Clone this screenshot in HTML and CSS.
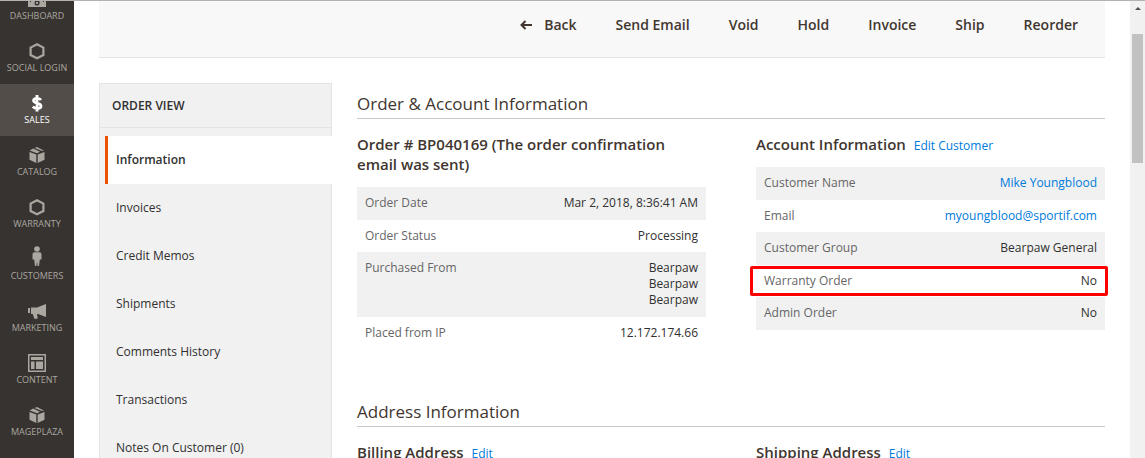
FILE: index.html
```html
<!DOCTYPE html>
<html lang="en">
<head>
    <meta charset="UTF-8">
    <meta name="viewport" content="width=device-width, initial-scale=1.0">
    <title>Order # BP040169</title>
    <link rel="stylesheet" href="styles.css">
</head>
<body>
    <!-- Main admin menu -->
    <nav class="admin-menu">
        <ul class="admin-menu-list">
            <li>
                <a href="#">
                    <svg class="icon" viewBox="0 0 18 18"><path fill="currentColor" fill-rule="evenodd" d="M0 2h18v15H0zM7 11h2.500l1.500-2h1l-.5 2v3q-.5 1.500-2.500 1.500T6.500 14zM8 12v1.500q1 1 2 0V12zM2 11h1v1H2zM15 11h1v1h-1z"/></svg>
                    <span>Dashboard</span>
                </a>
            </li>
            <li>
                <a href="#">
                    <svg class="icon" viewBox="0 0 18 18"><path fill="none" stroke="currentColor" stroke-width="2.200" d="M9 2.200l6.400 3.400v7.400L9 16.300l-6.400-3.300V5.600z"/></svg>
                    <span>Social Login</span>
                </a>
            </li>
            <li class="active">
                <a href="#">
                    <svg class="icon" viewBox="0 0 18 18"><path fill="none" stroke="currentColor" stroke-width="2.800" d="M13 6C11.500 4 5.500 3.400 5.500 6.500S13 8.700 13 12s-6 3.200-8.200.7M9 1v16.500"/></svg>
                    <span>Sales</span>
                </a>
            </li>
            <li>
                <a href="#">
                    <svg class="icon" viewBox="0 0 18 18"><path fill="currentColor" d="M1.500 6l6.800 2.600V17l-6.800-3.200zM16.500 6L9.700 8.600V17l6.800-3.200zM9 1L6.600 2l6.800 2.700L16.200 4.700zM5.200 2.600L1.700 4.500 9 7.300l3-1.500z"/></svg>
                    <span>Catalog</span>
                </a>
            </li>
            <li>
                <a href="#">
                    <svg class="icon" viewBox="0 0 18 18"><path fill="none" stroke="currentColor" stroke-width="2.200" d="M9 2.200l6.400 3.400v7.400L9 16.300l-6.400-3.300V5.600z"/></svg>
                    <span>Warranty</span>
                </a>
            </li>
            <li>
                <a href="#">
                    <svg class="icon icon-tall" viewBox="0 0 18 22"><circle cx="9" cy="3" r="2.800" fill="currentColor"/><path fill="currentColor" d="M6.500 6.300h5q2 0 2 2v5.200h-1.700L11 20H9.600L9 15.500 8.400 20H7l-.8-6.500H4.500V8.300q0-2 2-2z"/></svg>
                    <span>Customers</span>
                </a>
            </li>
            <li>
                <a href="#">
                    <svg class="icon" viewBox="0 0 18 18"><path fill="currentColor" d="M18 2v13l-8-3H9l.8 4.500-3.300.5-1.800-5H3V5.500h6zM0 6h2v5H0z"/></svg>
                    <span>Marketing</span>
                </a>
            </li>
            <li>
                <a href="#">
                    <svg class="icon" viewBox="0 0 18 18"><path fill="currentColor" fill-rule="evenodd" d="M0 0h18v18H0zM1.500 1.500v15h15v-15zM3 3h12v3H3zM3 7.500h3.500V15H3zM8 7.500h7V15H8z"/></svg>
                    <span>Content</span>
                </a>
            </li>
            <li>
                <a href="#">
                    <svg class="icon" viewBox="0 0 18 18"><path fill="currentColor" d="M1.500 6l6.800 2.600V17l-6.800-3.200zM16.500 6L9.700 8.600V17l6.800-3.200zM9 1L6.600 2l6.800 2.700L16.200 4.700zM5.200 2.600L1.700 4.500 9 7.300l3-1.500z"/></svg>
                    <span>Mageplaza</span>
                </a>
            </li>
        </ul>
    </nav>

    <div class="page">
        <div class="page-actions">
            <button type="button" class="back">
                <svg class="arrow" viewBox="0 0 12 10"><path fill="none" stroke="currentColor" stroke-width="2" d="M12 5H2M5.500 1L1.500 5l4 4"/></svg>
                Back
            </button>
            <button type="button">Send Email</button>
            <button type="button">Void</button>
            <button type="button">Hold</button>
            <button type="button">Invoice</button>
            <button type="button">Ship</button>
            <button type="button">Reorder</button>
        </div>

        <div class="columns">
            <!-- Order view tabs -->
            <aside class="order-tabs">
                <h2>Order View</h2>
                <ul>
                    <li class="active"><a href="#">Information</a></li>
                    <li><a href="#">Invoices</a></li>
                    <li><a href="#">Credit Memos</a></li>
                    <li><a href="#">Shipments</a></li>
                    <li><a href="#">Comments History</a></li>
                    <li><a href="#">Transactions</a></li>
                    <li><a href="#">Notes On Customer (0)</a></li>
                </ul>
            </aside>

            <main class="order-info">
                <section class="section">
                    <h2 class="section-title">Order &amp; Account Information</h2>
                    <div class="section-content">
                        <div class="block">
                            <h3>Order # BP040169 (The order confirmation email was sent)</h3>
                            <table>
                                <tr><th scope="row">Order Date</th><td>Mar 2, 2018, 8:36:41 AM</td></tr>
                                <tr><th scope="row">Order Status</th><td>Processing</td></tr>
                                <tr><th scope="row">Purchased From</th><td>Bearpaw<br>Bearpaw<br>Bearpaw</td></tr>
                                <tr><th scope="row">Placed from IP</th><td>12.172.174.66</td></tr>
                            </table>
                        </div>
                        <div class="block">
                            <h3>Account Information <a href="#">Edit Customer</a></h3>
                            <table>
                                <tr><th scope="row">Customer Name</th><td><a href="#">Mike Youngblood</a></td></tr>
                                <tr><th scope="row">Email</th><td><a href="#">myoungblood@sportif.com</a></td></tr>
                                <tr><th scope="row">Customer Group</th><td>Bearpaw General</td></tr>
                                <tr class="highlight"><th scope="row">Warranty Order</th><td>No</td></tr>
                                <tr><th scope="row">Admin Order</th><td>No</td></tr>
                            </table>
                        </div>
                    </div>
                </section>

                <section class="section">
                    <h2 class="section-title">Address Information</h2>
                    <div class="section-content">
                        <div class="block">
                            <h3>Billing Address <a href="#">Edit</a></h3>
                        </div>
                        <div class="block">
                            <h3>Shipping Address <a href="#">Edit</a></h3>
                        </div>
                    </div>
                </section>
            </main>
        </div>
    </div>

    <!-- Scroll track -->
    <div class="scroll-track">
        <svg class="scroll-up" viewBox="0 0 6 3"><path fill="#505050" d="M0 3l3-3 3 3z"/></svg>
        <div class="scroll-thumb"></div>
    </div>
</body>
</html>
```
FILE: styles.css
```css
* {
    box-sizing: border-box;
}

body {
    display: flex;
    height: 100vh;
    margin: 0;
    overflow: hidden;
    border-top: 1px solid #b3b1b1;
    background-color: #fff;
    color: #41362f;
    font-family: "Open Sans", "Noto Sans", sans-serif;
    font-size: 12px;
    line-height: 16px;
}

ul {
    margin: 0;
    padding: 0;
    list-style: none;
}

h2,
h3 {
    margin: 0;
}

a {
    color: #007bdb;
    text-decoration: none;
}

/* Admin menu */
.admin-menu {
    flex: none;
    width: 74px;
    background-color: #373330;
}

/* the page is scrolled, so the first item is cut off */
.admin-menu-list {
    margin-top: -21px;
}

.admin-menu a {
    display: flex;
    flex-direction: column;
    align-items: center;
    justify-content: flex-end;
    gap: 2px;
    height: 52px;
    padding-bottom: 10px;
    color: #aaa6a0;
    font-size: 9px;
    line-height: 12px;
    text-transform: uppercase;
    white-space: nowrap;
}

.admin-menu .active a {
    background-color: #524d49;
    color: #fff;
}

.icon {
    width: 18px;
    height: 18px;
}

.icon-tall {
    height: 22px;
}

/* Page */
.page {
    flex: 1;
    min-width: 0;
    padding: 0 25px;
}

.page-actions {
    display: flex;
    justify-content: flex-end;
    gap: 39px;
    height: 57px;
    padding: 14px 27px 22px;
    border-bottom: 1px solid #e3e3e3;
    background-color: #f8f8f8;
}

.page-actions button {
    display: flex;
    align-items: center;
    gap: 12px;
    padding: 0;
    border: none;
    background: none;
    color: #41362f;
    font: 600 14px/20px "Open Sans", "Noto Sans", sans-serif;
    cursor: pointer;
}

.arrow {
    width: 12px;
    height: 10px;
}

.columns {
    display: flex;
    gap: 25px;
    padding-top: 25px;
}

/* Order tabs */
.order-tabs {
    flex: none;
    width: 233px;
    border: 1px solid #e3e3e3;
    background-color: #f1f1f1;
}

.order-tabs h2 {
    padding: 14px 12px 13px;
    border-bottom: 1px solid #e3e3e3;
    color: #303030;
    font-size: 12px;
    font-weight: 600;
    text-transform: uppercase;
}

.order-tabs ul {
    padding: 8px 0 8px 5px;
}

.order-tabs a {
    display: block;
    padding: 16px 8px;
    border-left: 3px solid transparent;
    color: #303030;
}

.order-tabs .active a {
    margin-right: -1px;
    border-left-color: #eb5202;
    background-color: #fff;
    font-weight: 600;
}

/* Order information */
.order-info {
    flex: 1;
    min-width: 0;
}

.section {
    margin-bottom: 42px;
}

.section-title {
    padding: 11px 0 4px;
    border-bottom: 1px solid #cac9c9;
    font-size: 17px;
    font-weight: 400;
    line-height: 20px;
}

.section-content {
    display: grid;
    grid-template-columns: 1fr 1fr;
    gap: 50px;
    padding-top: 15px;
}

.block h3 {
    margin-bottom: 13px;
    font-size: 15px;
    font-weight: 600;
    line-height: 20px;
}

.block h3 a {
    margin-left: 4px;
    font-size: 12px;
    font-weight: 400;
    line-height: 16px;
}

table {
    width: 100%;
    border-collapse: collapse;
}

th,
td {
    padding: 8px;
    vertical-align: top;
}

th {
    color: #666;
    font-weight: 400;
    text-align: left;
}

td {
    color: #303030;
    text-align: right;
}

tr:nth-child(odd) {
    background-color: #f1f1f1;
}

tr:nth-child(odd) > * {
    padding-bottom: 9px;
}

/* red frame drawn over the row */
.highlight {
    position: relative;
}

.highlight::after {
    content: "";
    position: absolute;
    inset: 1px -3px 1px -6px;
    border: 3px solid #f00;
    border-radius: 2px;
    pointer-events: none;
}

/* Scroll track */
.scroll-track {
    display: flex;
    flex: none;
    flex-direction: column;
    align-items: center;
    width: 15px;
    background-color: #f1f1f1;
}

.scroll-up {
    width: 6px;
    height: 3px;
    margin: 6px 0 24px;
}

.scroll-thumb {
    width: 11px;
    height: 129px;
    background-color: #c1c1c1;
}
```
